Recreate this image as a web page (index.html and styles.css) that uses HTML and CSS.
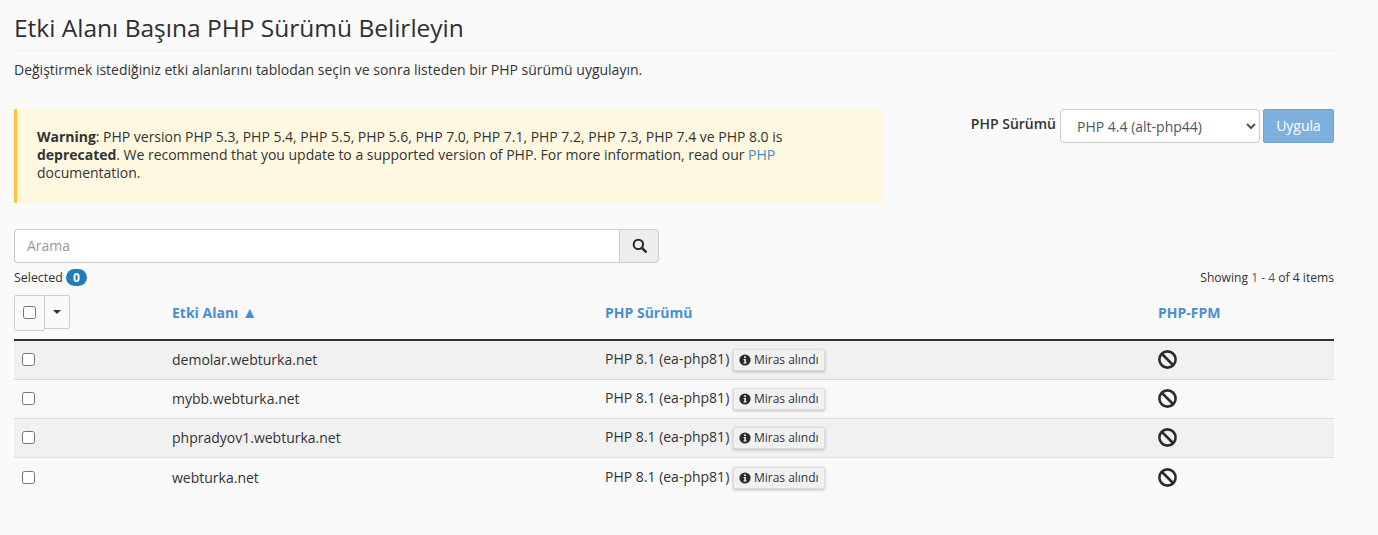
FILE: index.html
```
<!DOCTYPE html>
<html lang="tr">
<head>
<meta charset="utf-8">
<title>Etki Alanı Başına PHP Sürümü Belirleyin</title>
<link rel="stylesheet" href="styles.css">
</head>
<body>
<main class="page">
  <h1 class="title">Etki Alanı Başına PHP Sürümü Belirleyin</h1>
  <p class="intro">Değiştirmek istediğiniz etki alanlarını tablodan seçin ve sonra listeden bir PHP sürümü uygulayın.</p>
  <section class="top">
    <div class="alert"><b>Warning</b>: PHP version PHP 5.3, PHP 5.4, PHP 5.5, PHP 5.6, PHP 7.0, PHP 7.1, PHP 7.2, PHP 7.3, PHP 7.4 ve PHP 8.0 is <b>deprecated</b>. We recommend that you update to a supported version of PHP. For more information, read our <a href="#">PHP</a> documentation.</div>
    <form class="apply">
      <label class="apply-label" for="ver">PHP Sürümü</label>
      <select class="apply-select" id="ver"><option>PHP 4.4 (alt-php44)</option></select>
      <button class="apply-btn" type="button">Uygula</button>
    </form>
  </section>
  <div class="search">
    <input class="search-input" type="text" placeholder="Arama">
    <button class="search-btn" type="button" aria-label="Ara">
      <svg viewBox="0 0 16 16" width="15" height="15"><circle cx="6.8" cy="6.8" r="5" fill="none" stroke="#2b2b2b" stroke-width="2.2"/><path d="M10.5 10.5L14.6 14.6" stroke="#2b2b2b" stroke-width="2.8" stroke-linecap="round"/></svg>
    </button>
  </div>
  <div class="status">
    <span class="selected">Selected <span class="badge">0</span></span>
    <span class="showing">Showing <span class="muted">1 - 4</span> of 4 items</span>
  </div>
  <table class="grid">
    <colgroup><col class="c1"><col class="c2"><col class="c3"><col class="c4"></colgroup>
    <thead>
      <tr>
        <th class="th-check">
          <div class="picker">
            <span class="picker-box"><input type="checkbox"></span>
            <span class="picker-caret"><i></i></span>
          </div>
        </th>
        <th><a href="#">Etki Alanı <span class="sort">▲</span></a></th>
        <th><a href="#">PHP Sürümü</a></th>
        <th><a href="#">PHP-FPM</a></th>
      </tr>
    </thead>
    <tbody>
      <tr>
        <td class="td-check"><input type="checkbox"></td>
        <td>demolar.webturka.net</td>
        <td>PHP 8.1 (ea-php81) <span class="chip"><svg class="info" viewBox="0 0 12 12"><circle cx="6" cy="6" r="5.6" fill="#2b2b2b"/><rect x="5.1" y="2.3" width="1.8" height="1.7" fill="#f1f1f1"/><path d="M4.6 5h2.3v3.5h.7v1H4.5v-1h.8V6h-.7z" fill="#f1f1f1"/></svg>Miras alındı</span></td>
        <td><svg class="ban" viewBox="0 0 18 18"><circle cx="9" cy="9" r="7.7" fill="none" stroke="#2b2b2b" stroke-width="2.4"/><path d="M3.8 3.8L14.2 14.2" stroke="#2b2b2b" stroke-width="2.4"/></svg></td>
      </tr>
      <tr>
        <td class="td-check"><input type="checkbox"></td>
        <td>mybb.webturka.net</td>
        <td>PHP 8.1 (ea-php81) <span class="chip"><svg class="info" viewBox="0 0 12 12"><circle cx="6" cy="6" r="5.6" fill="#2b2b2b"/><rect x="5.1" y="2.3" width="1.8" height="1.7" fill="#f1f1f1"/><path d="M4.6 5h2.3v3.5h.7v1H4.5v-1h.8V6h-.7z" fill="#f1f1f1"/></svg>Miras alındı</span></td>
        <td><svg class="ban" viewBox="0 0 18 18"><circle cx="9" cy="9" r="7.7" fill="none" stroke="#2b2b2b" stroke-width="2.4"/><path d="M3.8 3.8L14.2 14.2" stroke="#2b2b2b" stroke-width="2.4"/></svg></td>
      </tr>
      <tr>
        <td class="td-check"><input type="checkbox"></td>
        <td>phpradyov1.webturka.net</td>
        <td>PHP 8.1 (ea-php81) <span class="chip"><svg class="info" viewBox="0 0 12 12"><circle cx="6" cy="6" r="5.6" fill="#2b2b2b"/><rect x="5.1" y="2.3" width="1.8" height="1.7" fill="#f1f1f1"/><path d="M4.6 5h2.3v3.5h.7v1H4.5v-1h.8V6h-.7z" fill="#f1f1f1"/></svg>Miras alındı</span></td>
        <td><svg class="ban" viewBox="0 0 18 18"><circle cx="9" cy="9" r="7.7" fill="none" stroke="#2b2b2b" stroke-width="2.4"/><path d="M3.8 3.8L14.2 14.2" stroke="#2b2b2b" stroke-width="2.4"/></svg></td>
      </tr>
      <tr>
        <td class="td-check"><input type="checkbox"></td>
        <td>webturka.net</td>
        <td>PHP 8.1 (ea-php81) <span class="chip"><svg class="info" viewBox="0 0 12 12"><circle cx="6" cy="6" r="5.6" fill="#2b2b2b"/><rect x="5.1" y="2.3" width="1.8" height="1.7" fill="#f1f1f1"/><path d="M4.6 5h2.3v3.5h.7v1H4.5v-1h.8V6h-.7z" fill="#f1f1f1"/></svg>Miras alındı</span></td>
        <td><svg class="ban" viewBox="0 0 18 18"><circle cx="9" cy="9" r="7.7" fill="none" stroke="#2b2b2b" stroke-width="2.4"/><path d="M3.8 3.8L14.2 14.2" stroke="#2b2b2b" stroke-width="2.4"/></svg></td>
      </tr>
    </tbody>
  </table>
</main>
</body>
</html>
```
FILE: styles.css
```
* { box-sizing: border-box; }
html, body { margin: 0; height: 100%; }
body {
  background: #fafafa;
  color: #333;
  font-family: "Open Sans", sans-serif;
  font-size: 14px;
  line-height: 18px;
  overflow: hidden;
}
.page { width: 1334px; padding: 11px 0 0 14px; }
.title {
  margin: 0;
  height: 40px;
  border-bottom: 1px solid #eee;
  font-size: 24.5px;
  line-height: 33px;
  font-weight: 400;
  color: #2f2f2f;
}
.intro { margin: 10px 0 0; height: 18px; }
.top { display: flex; justify-content: space-between; margin-top: 30px; }
.alert {
  width: 870px;
  height: 94px;
  padding: 19px 20px 20px 20px;
  background: #fff8e1;
  border-left: 3px solid #fdc13c;
  letter-spacing: -0.018px;
}
.alert a { color: #4a8bb8; text-decoration: none; }
.alert b { font-weight: 700; }
.apply { display: flex; align-items: flex-start; }
.apply-label { font-weight: 600; font-size: 14px; margin: 6px 4px 0 0; }
.apply-select {
  width: 200px;
  height: 34px;
  padding: 0 12px;
  background: #fff;
  border: 1px solid #ccc;
  border-radius: 4px;
  color: #555;
  font: 14px/20px "Open Sans", sans-serif;
}
.apply-btn {
  width: 71px;
  height: 34px;
  margin-left: 3px;
  background: #7eb0de;
  border: 1px solid #70a5d6;
  border-radius: 2px;
  color: #fff;
  font: 14px/20px "Open Sans", sans-serif;
  padding: 0;
}
.search { display: flex; width: 645px; margin-top: 26px; }
.search-input {
  flex: 1;
  height: 34px;
  padding: 0 12px 2px;
  background: #fff;
  border: 1px solid #ccc;
  border-right: 0;
  border-radius: 4px 0 0 4px;
  color: #555;
  font: 14px/20px "Open Sans", sans-serif;
  outline: 0;
}
.search-input::placeholder { color: #999; opacity: 1; }
.search-btn {
  display: flex;
  align-items: center;
  justify-content: center;
  width: 40px;
  height: 34px;
  padding: 0 0 2px;
  background: #eee;
  border: 1px solid #ccc;
  border-radius: 0 4px 4px 0;
}
.status {
  display: flex;
  justify-content: space-between;
  align-items: center;
  height: 20px;
  margin-top: 5px;
  font-size: 12px;
}
.selected { font-size: 12.4px; }
.showing { font-size: 12.1px; }
.muted { color: #555; }
.badge {
  display: inline-block;
  min-width: 21px;
  height: 17px;
  padding: 0 7px;
  background: #1f7eb8;
  border-radius: 10px;
  color: #fff;
  font-size: 12px;
  font-weight: 700;
  line-height: 17px;
  text-align: center;
}
.grid { width: 1320px; border-collapse: collapse; table-layout: fixed; }
.c1 { width: 150px; }
.c2 { width: 433px; }
.c3 { width: 553px; }
.grid th {
  height: 52px;
  padding: 0 8px 1px;
  border-bottom: 2px solid #333;
  text-align: left;
  vertical-align: middle;
  font-weight: 700;
  font-size: 14px;
}
.grid th a { color: #4a8ed0; text-decoration: none; }
.sort { font-size: 15.5px; line-height: 14px; }
.grid .th-check { padding: 7px 0 0; vertical-align: top; }
.grid td {
  height: 39px;
  padding: 0 8px;
  border-bottom: 1px solid #ddd;
  vertical-align: middle;
}
.grid tbody tr:nth-child(odd) td { background: #f1f1f1; }
.grid tbody tr:nth-child(even) td { background: #f9f9f9; }
.grid tbody tr:last-child td { border-bottom: 0; padding-top: 2px; }
.grid .td-check { padding: 0 0 0 8px; line-height: 0; }
input[type="checkbox"] { width: 13px; height: 13px; margin: 0; vertical-align: middle; }
.picker { display: flex; align-items: flex-start; }
.picker-box {
  display: flex;
  align-items: center;
  justify-content: center;
  width: 31px;
  height: 36px;
  padding-bottom: 1px;
  background: #fafafa;
  border: 1px solid #ccc;
  border-radius: 2px;
}
.picker-caret {
  display: flex;
  align-items: center;
  justify-content: center;
  width: 26px;
  height: 34px;
  margin-left: -1px;
  border: 1px solid #ccc;
  border-radius: 0 2px 2px 0;
}
.picker-caret i {
  width: 0;
  height: 0;
  border-left: 4px solid transparent;
  border-right: 4px solid transparent;
  border-top: 4px solid #333;
}
.chip {
  display: inline-flex;
  align-items: center;
  height: 22px;
  padding: 0 5px;
  background: #f1f1f1;
  border: 1px solid #ddd;
  border-radius: 2px;
  box-shadow: 0 1px 3px rgba(0, 0, 0, .25);
  font-size: 12px;
  color: #333;
  vertical-align: -2px;
}
.info { width: 12px; height: 12px; margin-right: 3px; }
.ban { display: block; width: 19px; height: 19px; margin-top: -1px; }
```
